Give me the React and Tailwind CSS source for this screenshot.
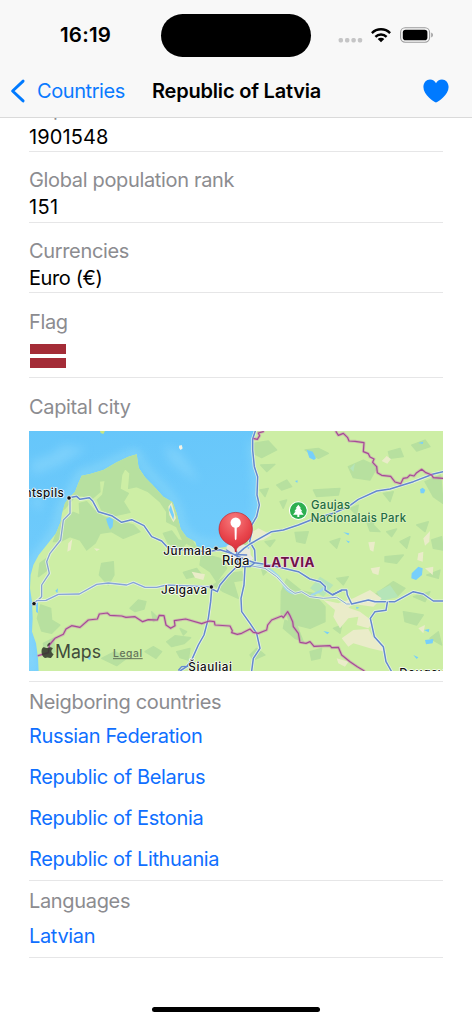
const LITHUANIAN_BORDER =
  "M55 692 L85 683 L88 660 L105 640 L130 628 L138 612 L155 602 L180 607 L205 585 L232 582 L238 567 L262 564 L270 571 L305 573 L318 577 L345 575 L368 590 L385 584 L412 585 L418 571 L432 572 L438 600 L452 610 L465 602 L463 587 L497 582 L545 596 L568 588 L583 590 L585 600 L630 603 L637 617 L635 623 L652 628 L665 625 L690 612 L700 622 L715 625 L740 615 L743 600 L755 585 L785 573 L790 578 L803 560 L810 572 L818 590 L820 605 L835 625 L840 652 L858 655 L870 650 L882 664 L930 662 L935 668 L955 667 L965 690 L990 710 L1012 725 L1032 737";
const ESTONIAN_BORDER =
  "M730 20 L715 24 L719 32 L712 43 L702 41 M948 20 L955 31 L970 25 L983 38 L987 48 L1005 49 L1032 53 L1030 80 L1045 86 L1050 96 L1062 102 L1058 112 L1070 125 L1072 143 L1085 151 L1112 154 L1125 171 L1142 176 L1150 160 L1162 158 L1170 150 L1182 153 L1190 143 L1205 133 L1216 142 L1235 150 L1240 158 L1269 160";

function StatusBar() {
  return (
    <div className="relative h-[64px] w-full">
      <span className="absolute left-[60px] top-[23px] text-[20.5px] font-[560] leading-6 tracking-[0.2px] text-black">16:19</span>
      <div className="absolute left-[161px] top-[14px] h-[43px] w-[150px] rounded-full bg-black" />
      <svg className="absolute left-[336px] top-[22px]" width="100" height="26" viewBox="336 22 100 26">
        <g fill="#c5c5c6">
          <rect x="338.6" y="38" width="4.4" height="4.4" rx="1.6" />
          <rect x="345" y="38" width="4.4" height="4.4" rx="1.6" />
          <rect x="351.4" y="38" width="4.4" height="4.4" rx="1.6" />
          <rect x="357.8" y="38" width="4.4" height="4.4" rx="1.6" />
        </g>
        <g fill="none" stroke="#000" strokeWidth="2.4">
          <path d="M371.9 33.1 A12.8 12.8 0 0 1 390.1 33.1" />
          <path d="M375.4 36.8 A7.8 7.8 0 0 1 386.6 36.8" />
        </g>
        <path d="M381 42.2 L377.7 39 A4.7 4.7 0 0 1 384.3 39 Z" fill="#000" />
        <rect x="400.6" y="27.8" width="29" height="14.4" rx="4.6" fill="none" stroke="#9b9b9c" strokeWidth="1.1" />
        <rect x="402.8" y="29.8" width="24.6" height="10.4" rx="2.8" fill="#000" />
        <path d="M431.2 32.6 Q433 33.2 433 35 Q433 36.8 431.2 37.4 Z" fill="#a0a0a1" />
      </svg>
    </div>
  );
}

function Header() {
  return (
    <header className="relative z-10 h-[118px] w-full border-b border-[#dadada] bg-[#f8f8f8]">
      <StatusBar />
      <div className="flex h-[53px] items-center pl-[10px] pr-[23px]">
        <svg width="16" height="24" viewBox="0 0 16 24" className="shrink-0">
          <path d="M13.1 2.1 L2.6 12 L13.1 21.9" fill="none" stroke="#007aff" strokeWidth="2.9" strokeLinecap="round" strokeLinejoin="round" />
        </svg>
        <span className="ml-[11px] w-[115px] whitespace-nowrap text-[20px] font-normal leading-6 tracking-[-0.42px] text-[#0a7aff]">Countries</span>
        <span className="whitespace-nowrap text-[20px] font-[570] leading-6 tracking-[-0.2px] text-black">Republic of Latvia</span>
        <svg width="26" height="24" viewBox="0 0 26 24" className="ml-auto shrink-0">
          <path d="M13 23.6 C11 22.6 0.4 16.4 0.4 8 C0.4 3.6 3.4 0.5 7 0.5 C9.8 0.5 11.9 2 13 4.3 C14.1 2 16.2 0.5 19 0.5 C22.6 0.5 25.6 3.6 25.6 8 C25.6 16.4 15 22.6 13 23.6 Z" fill="#007aff" />
        </svg>
      </div>
    </header>
  );
}

function Label({ children }) {
  return <div className="h-[27px] whitespace-nowrap text-[20px] font-normal leading-[27px] tracking-[-0.34px] text-[#8c8c90]">{children}</div>;
}

function Field({ label, value, tracking = "tracking-[0.1px]" }) {
  return (
    <div className="h-[70.8px] border-b border-[#e6e6e7] pt-[15.4px]">
      <Label>{label}</Label>
      <div className={`h-[27px] whitespace-nowrap pt-[0.2px] text-[20px] font-normal leading-[27px] text-black ${tracking}`}>{value}</div>
    </div>
  );
}

function LinkRow({ children }) {
  return <a className="flex h-[41.2px] items-center whitespace-nowrap text-[20px] font-normal tracking-[-0.36px] text-[#0f6fff]">{children}</a>;
}

function Road({ d, w = 4.5, c = "#6488cf" }) {
  return (
    <>
      <path d={d} stroke="#e8f3e8" strokeOpacity="0.85" strokeWidth={w + 5} />
      <path d={d} stroke={c} strokeWidth={w} />
    </>
  );
}

function Border({ d }) {
  return (
    <>
      <path d={d} stroke="#c985b5" strokeOpacity="0.45" strokeWidth="9" />
      <path d={d} stroke="#a64a97" strokeWidth="3.6" />
    </>
  );
}

function MapView() {
  return (
    <svg className="block h-[240px] w-[414px]" viewBox="27 18 1242 720">
      <defs>
        <linearGradient id="sea" x1="0" y1="0" x2="0.25" y2="1">
          <stop offset="0" stopColor="#66c6fa" />
          <stop offset="1" stopColor="#77cffc" />
        </linearGradient>
        <radialGradient id="pin" cx="0.45" cy="0.2" r="0.9">
          <stop offset="0" stopColor="#f77c7e" />
          <stop offset="0.55" stopColor="#e8454c" />
          <stop offset="1" stopColor="#cf2730" />
        </radialGradient>
        <filter id="soft" x="-20%" y="-20%" width="140%" height="140%"><feGaussianBlur stdDeviation="14" /></filter>
        <clipPath id="landclip">
          <path id="land" d="M350 88 L325 95 L290 112 L250 135 L210 147 L185 152 L175 175 L165 200 L146 220 L135 235 L126 265 L122 290 L108 325 L80 360 L56 390 L40 420 L32 450 L30 490 L36 530 L38 580 L36 620 L48 655 L54 700 L56 740 L1270 740 L1270 16 L706 16 L698 34 L697 62 L704 110 L712 155 L713 200 L717 240 L713 278 L694 302 L694 345 L650 360 L600 368 L560 372 L530 364 L526 350 L500 337 L482 312 L470 265 L458 232 L430 215 L400 182 L375 157 L356 128 Z" />
        </clipPath>
      </defs>
      <rect x="20" y="10" width="1260" height="740" fill="url(#sea)" />
      <g filter="url(#soft)" fill="#91dafd" opacity="0.5">
        <path d="M30 110 L90 90 L130 60 L200 70 L120 120 L40 150 Z" />
        <path d="M430 60 L480 80 L540 170 L500 150 L450 110 Z" />
        <path d="M30 230 L70 200 L60 260 Z" />
      </g>
      <path d="M350 84 C300 90 240 140 185 145 C165 170 155 210 125 245 C115 330 80 350 30 420 L26 520 L34 740" fill="none" stroke="#9be0f8" strokeWidth="20" opacity="0.6" filter="url(#soft)" />
      <path d="M350 80 C370 160 480 200 480 290 C500 350 560 380 694 340 L714 240 L698 50" fill="none" stroke="#9be0f8" strokeWidth="16" opacity="0.6" filter="url(#soft)" />
      <path d="M240 18 L255 18 L250 27 L242 24 Z" fill="#c8e680" />
      <path d="M477 62 L485 60 L488 70 L482 75 L477 69 Z" fill="#f4f2e4" />
      <use href="#land" fill="#cdeea5" />

      <g clipPath="url(#landclip)" fill="#b7e09f" stroke="#b7e09f" strokeWidth="4" strokeLinejoin="round">
        <path d="M350 80 L170 140 L145 215 L120 260 L135 250 L165 215 L185 212 L215 222 L240 200 L238 168 L256 166 L248 210 L232 225 L245 255 L285 272 L330 262 L310 230 L325 205 L300 192 L305 150 L315 130 L330 145 L326 190 L350 185 L385 200 L420 230 L440 260 L440 290 L470 305 L490 350 L530 370 L470 265 L458 232 L400 182 Z" />
        <path d="M122 290 L160 262 L180 270 L178 235 L200 230 L222 255 L250 275 L300 290 L340 300 L360 320 L310 340 L275 320 L240 325 L225 355 L200 375 L180 345 L150 335 L120 350 L100 350 Z" />
        <path d="M430 325 L455 318 L475 345 L500 352 L485 370 L445 355 Z" />
        <path d="M245 415 L280 410 L282 450 L265 480 L238 450 Z" />
        <path d="M60 415 L80 400 L82 435 L55 455 Z" />
        <path d="M62 540 L92 550 L95 585 L120 600 L95 625 L65 618 L52 580 Z" />
        <path d="M70 655 L100 640 L105 680 L75 690 Z" />
        <path d="M330 550 L355 525 L378 530 L372 552 L345 560 Z" />
        <path d="M395 560 L415 580 L400 590 Z M440 650 L465 632 L512 638 L492 656 L455 665 Z M480 610 L500 620 L490 630 Z M375 680 L400 665 L425 680 L408 700 Z M245 700 L285 680 L320 700 L290 722 Z M470 680 L510 670 L505 705 L480 698 Z" />
        <path d="M545 385 L600 400 L620 430 L590 470 L570 440 L540 420 Z M490 442 L530 430 L545 450 L500 460 Z" />
        <path d="M610 345 L660 325 L694 345 L660 380 L630 375 Z" />
        <path d="M580 480 L610 500 L655 520 L640 470 L670 465 L665 440 L630 445 Z" />
        <path d="M784 500 L800 462 L845 498 L880 505 L915 545 L915 590 L870 610 L810 595 L800 570 L783 565 Z M795 585 L830 600 L850 650 L825 640 L790 610 Z" />
        <path d="M700 55 L745 48 L770 75 L725 98 L700 85 Z M722 120 L765 118 L740 140 Z M855 75 L895 70 L925 85 L895 100 Z M985 125 L1030 105 L1072 125 L1050 165 L1000 158 Z M1105 80 L1140 70 L1150 95 L1110 100 Z M1175 60 L1215 45 L1230 65 L1190 78 Z" />
        <path d="M770 180 L800 165 L815 185 L785 195 Z M720 195 L745 190 L735 215 Z M880 195 L960 190 L955 210 L890 215 Z M780 230 L800 225 L790 250 Z M1090 205 L1120 200 L1110 230 Z M1215 170 L1262 150 L1269 235 L1240 215 Z M990 250 L1015 240 L1010 270 Z" />
        <path d="M825 322 L865 320 L855 355 L830 350 Z M1040 290 L1065 280 L1060 300 L1080 320 L1050 318 Z M1140 350 L1170 335 L1160 370 Z M1190 300 L1225 290 L1215 320 Z M1235 345 L1265 335 L1269 375 L1240 370 Z M930 350 L960 340 L950 370 Z M1100 320 L1130 312 L1115 335 Z" />
        <path d="M1095 395 L1150 390 L1130 415 L1095 410 Z M1050 520 L1120 470 L1155 490 L1130 515 Z M1220 450 L1260 435 L1255 460 Z M950 460 L985 455 L970 480 Z M1150 560 L1210 570 L1190 600 L1155 590 Z M1230 640 L1255 620 L1265 660 Z M690 690 L710 670 L735 690 L700 705 Z M940 610 L965 600 L960 625 Z M870 680 L905 670 L900 700 L875 705 Z" />
        <path d="M735 350 L765 345 L750 365 Z M720 415 L750 430 L730 450 Z M1180 515 L1230 500 L1215 530 Z" />
      </g>
      <g fill="#b5e5b8">
        <path d="M870 490 L900 455 L940 480 L910 515 Z M1070 500 L1110 480 L1135 515 L1085 528 Z M990 130 L1005 115 L1000 140 Z" />
      </g>
      <g fill="#eaecc9">
        <path d="M690 325 L715 310 L755 330 L730 345 L694 350 Z" />
        <path d="M1085 108 L1100 93 L1113 102 L1102 116 Z M1210 340 L1230 318 L1228 350 L1215 362 Z M1045 352 L1065 350 L1060 380 L1050 375 Z M1195 385 L1210 380 L1208 410 L1192 405 Z M1215 430 L1240 425 L1238 450 Z M1052 430 L1080 425 L1075 450 L1058 445 Z" />
        <path d="M910 525 L955 535 L1000 520 L1050 495 L1085 520 L1060 545 L1000 537 L985 548 L1020 560 L1060 590 L1045 610 L1010 600 L1015 575 L985 580 L960 610 L940 575 L945 555 Z M965 640 L1000 615 L1045 612 L1058 635 L1080 655 L1095 680 L1050 670 L1000 655 L985 665 Z" />
        <path d="M1195 610 L1215 600 L1210 625 Z M950 700 L985 710 L975 725 L955 715 Z M145 355 L157 342 L152 375 L142 380 Z M515 440 L555 448 L550 465 L525 458 Z M445 245 L455 232 L468 280 L460 292 L448 270 Z M222 370 L240 372 L230 378 Z" />
      </g>
      <path d="M620 362 L650 350 L690 366 L692 390 L700 400 L690 412 L635 410 L620 385 Z" fill="#e9e8de" />
      <g fill="#77cffb">
        <path d="M258 282 L268 276 L280 284 L278 305 L270 314 L264 300 Z M447 255 L452 240 L462 270 L460 285 Z" />
        <path d="M860 74 L878 80 L888 100 L882 105 L868 98 Z M1200 193 L1208 188 L1216 195 L1212 205 L1202 205 Z M1195 54 L1210 50 L1208 57 Z M825 168 L833 166 L832 174 Z M970 322 L988 325 L985 331 Z M978 346 L990 350 L985 354 Z M678 364 L690 368 L685 372 Z" />
        <path d="M1175 445 L1195 425 L1208 430 L1206 450 L1188 465 L1174 460 Z M1212 615 L1228 612 L1226 622 Z M1215 645 L1240 642 L1238 655 L1218 658 Z M910 618 L928 622 L922 628 Z M1180 690 L1195 697 L1190 702 Z M1008 545 L1018 548 L1010 552 Z M202 700 L214 692 L210 706 Z M106 497 L114 490 L112 505 Z M48 525 L54 530 L54 565 L48 560 Z" />
      </g>

      <g fill="none" strokeLinejoin="round" strokeLinecap="round">
        <path d="M655 398 C700 420 745 420 770 450 C790 465 790 500 820 505 M875 510 L902 498 L912 488" stroke="#a0d7ea" strokeWidth="7" />
        <Road d="M147 218 L170 214 L180 223 L208 218 L218 228 L235 260 L275 272 L305 292 L335 284 L372 302 L395 335 L425 348 L445 370 L560 380 L600 374 L650 390" />
        <Road d="M150 218 L150 265 L130 285 L122 345 L90 385 L80 410 L88 445 L65 480 L65 515 L42 536" w={4} c="#86a4cf" />
        <Road d="M42 536 L50 527 L78 526 L115 508 L178 507 L230 478 L265 474 L320 480 L340 472 L375 487 L410 487 L440 480 L560 485 L574 486" w={4} c="#86a4d7" />
        <Road d="M650 425 L625 450 L600 480 L592 500 L575 492 L572 530 L565 580 L552 630 L535 660 L515 705 L500 725 L480 738" />
        <path d="M476 735 L485 725 L503 724" stroke="#6488cf" strokeWidth="4" />
        <Road d="M706 18 L698 42 L698 75 L703 125 L713 155 L711 210 L718 240 L710 275 L695 300 L695 322 L689 350 L704 375 L706 415" />
        <Road d="M1269 140 L1240 147 L1180 170 L1110 192 L1070 198 L1015 223 L985 245 L940 265 L880 282 L835 300 L790 315 L755 320 L690 357 L672 370 L655 385" />
        <Road d="M680 420 L735 430 L770 455 L805 492 L825 505 L845 500 L870 515 L910 520 L950 517 L980 537 L998 537" w={3} c="#89a9d2" />
        <Road d="M640 388 L672 402 L704 413 L750 420 L835 440 L870 462 L900 470 L916 485 L915 495 L938 510 L965 495 L980 495 L982 510 L995 537 L1045 525 L1065 530 L1125 530 L1180 500 L1210 507 L1240 528 L1269 528" />
        <Road d="M675 425 L672 480 L663 520 L665 560 L690 595 L710 625 L720 670 L700 700 L695 738" />
        <Road d="M1102 532 L1098 556 L1065 560 L1051 580 L1063 635 L1090 665 L1098 710 L1114 738" />
        <path d="M938 508 L965 497 M650 380 L655 425 L690 425 L704 413 M620 375 L640 388 L680 390" stroke="#6488cf" strokeWidth="4" />
        <Border d={LITHUANIAN_BORDER} />
        <Border d={ESTONIAN_BORDER} />
      </g>

      <g fill="#111" stroke="#fff" strokeWidth="2">
        <circle cx="147" cy="219" r="6.5" />
        <circle cx="588" cy="370" r="6.5" />
        <circle cx="574" cy="486" r="6.5" />
        <circle cx="42" cy="536" r="6.5" />
      </g>

      <g className="font-['Inter',sans-serif]" fontWeight="500" fontSize="35" fill="#111" stroke="#fff" strokeOpacity="0.9" strokeWidth="5" strokeLinejoin="round" style={{ paintOrder: "stroke" }}>
        <text x="133" y="217" textAnchor="end" letterSpacing="1.4">Ventspils</text>
        <text x="430" y="391" textLength="145">Jūrmala</text>
        <text x="423" y="506" textLength="138">Jelgava</text>
        <text x="505" y="739" textLength="131">Šiauliai</text>
        <text x="1138" y="755" letterSpacing="1.8">Daugavpils</text>
        <text x="606" y="419" fontSize="38" textLength="82">Riga</text>
        <g fill="#1f6b43" stroke="#dff3c4" fontSize="34">
          <text x="873" y="252" textLength="117">Gaujas</text>
          <text x="872" y="290" textLength="286">Nacionalais Park</text>
        </g>
        <text x="730" y="427" fontWeight="750" fontSize="40" fill="#6f1048" stroke="#f5dceb" textLength="153">LATVIA</text>
      </g>

      <circle cx="835" cy="257" r="28" fill="#fff" />
      <circle cx="835" cy="257" r="25" fill="#2daf50" />
      <path d="M835 239 L843 250 L840 250 L847 259 L843 259 L851 269 L838 269 L838 276 L832 276 L832 269 L819 269 L827 259 L823 259 L830 250 L827 250 Z" fill="#fff" />

      <path d="M647 379 C644 368 637 362 627 358 A50 50 0 1 1 667 358 C657 362 650 368 647 379 Z" fill="url(#pin)" stroke="#c3232c" strokeWidth="2" />
      <circle cx="647" cy="293" r="15.5" fill="#fff" />
      <path d="M643.5 306 L650.5 306 L649.5 342 Q647 349 644.5 342 Z" fill="#fff" />
      <circle cx="647" cy="378" r="3" fill="#b81f2a" />

      <g fill="#2f3529" fillOpacity="0.86">
        <path d="M91 669 C87 666 83 670 80 670 C76 670 73 666 69 669 C63 674 65 690 72 695 C75 697 77 695 81 695 C85 695 88 698 91 695 C94 692 96 688 97 686 C89 682 90 674 95 672 C94 670 92 669 91 669 Z" transform="translate(-11 -105) scale(1.155)" />
        <path d="M80 667 C80 661 84 658 88 657 C88 663 84 667 80 667 Z" transform="translate(-11 -106) scale(1.155)" />
      </g>
      <g className="font-['Inter',sans-serif]" fill="#414b3a">
        <text x="105" y="700" fontSize="54" fontWeight="400" textLength="138" lengthAdjust="spacingAndGlyphs">Maps</text>
        <text x="279" y="695" fontSize="31" fontWeight="500" fill="#64745a" textLength="87">Legal</text>
        <path d="M279 701 H368" stroke="#64745a" strokeWidth="3" />
      </g>
    </svg>
  );
}

export default function App() {
  return (
    <div className="relative flex h-[1022px] w-[472px] flex-col overflow-hidden bg-white font-['Inter',sans-serif]">
      <Header />
      <main className="-mt-[37px] flex flex-col px-[29px]">
        <Field label="Population" value="1901548" />
        <Field label="Global population rank" value="151" tracking="tracking-[0.4px]" />
        <Field label="Currencies" value="Euro (€)" tracking="tracking-[-0.4px]" />
        <div className="h-[84.6px] border-b border-[#e6e6e7] pt-[15.6px]">
          <Label>Flag</Label>
          <div className="ml-[1px] mt-[8px] flex h-[24px] w-[36px] flex-col justify-between">
            <div className="h-[9.6px] bg-[#a42c37]" />
            <div className="h-[9.6px] bg-[#a42c37]" />
          </div>
        </div>
        <div className="h-[304px] border-b border-[#e6e6e7] pt-[16px]">
          <Label>Capital city</Label>
          <div className="mt-[10.5px]"><MapView /></div>
        </div>
        <div className="h-[199px] border-b border-[#e6e6e7] pt-[7px]">
          <Label>Neigboring countries</Label>
          <div className="-mt-[1px] flex flex-col">
            <LinkRow>Russian Federation</LinkRow>
            <LinkRow>Republic of Belarus</LinkRow>
            <LinkRow>Republic of Estonia</LinkRow>
            <LinkRow>Republic of Lithuania</LinkRow>
          </div>
        </div>
        <div className="h-[76.8px] border-b border-[#e6e6e7] pt-[7px]">
          <Label>Languages</Label>
          <LinkRow>Latvian</LinkRow>
        </div>
      </main>
      <div className="absolute bottom-[10px] left-[152px] h-[5.5px] w-[168px] rounded-full bg-black" />
    </div>
  );
}
